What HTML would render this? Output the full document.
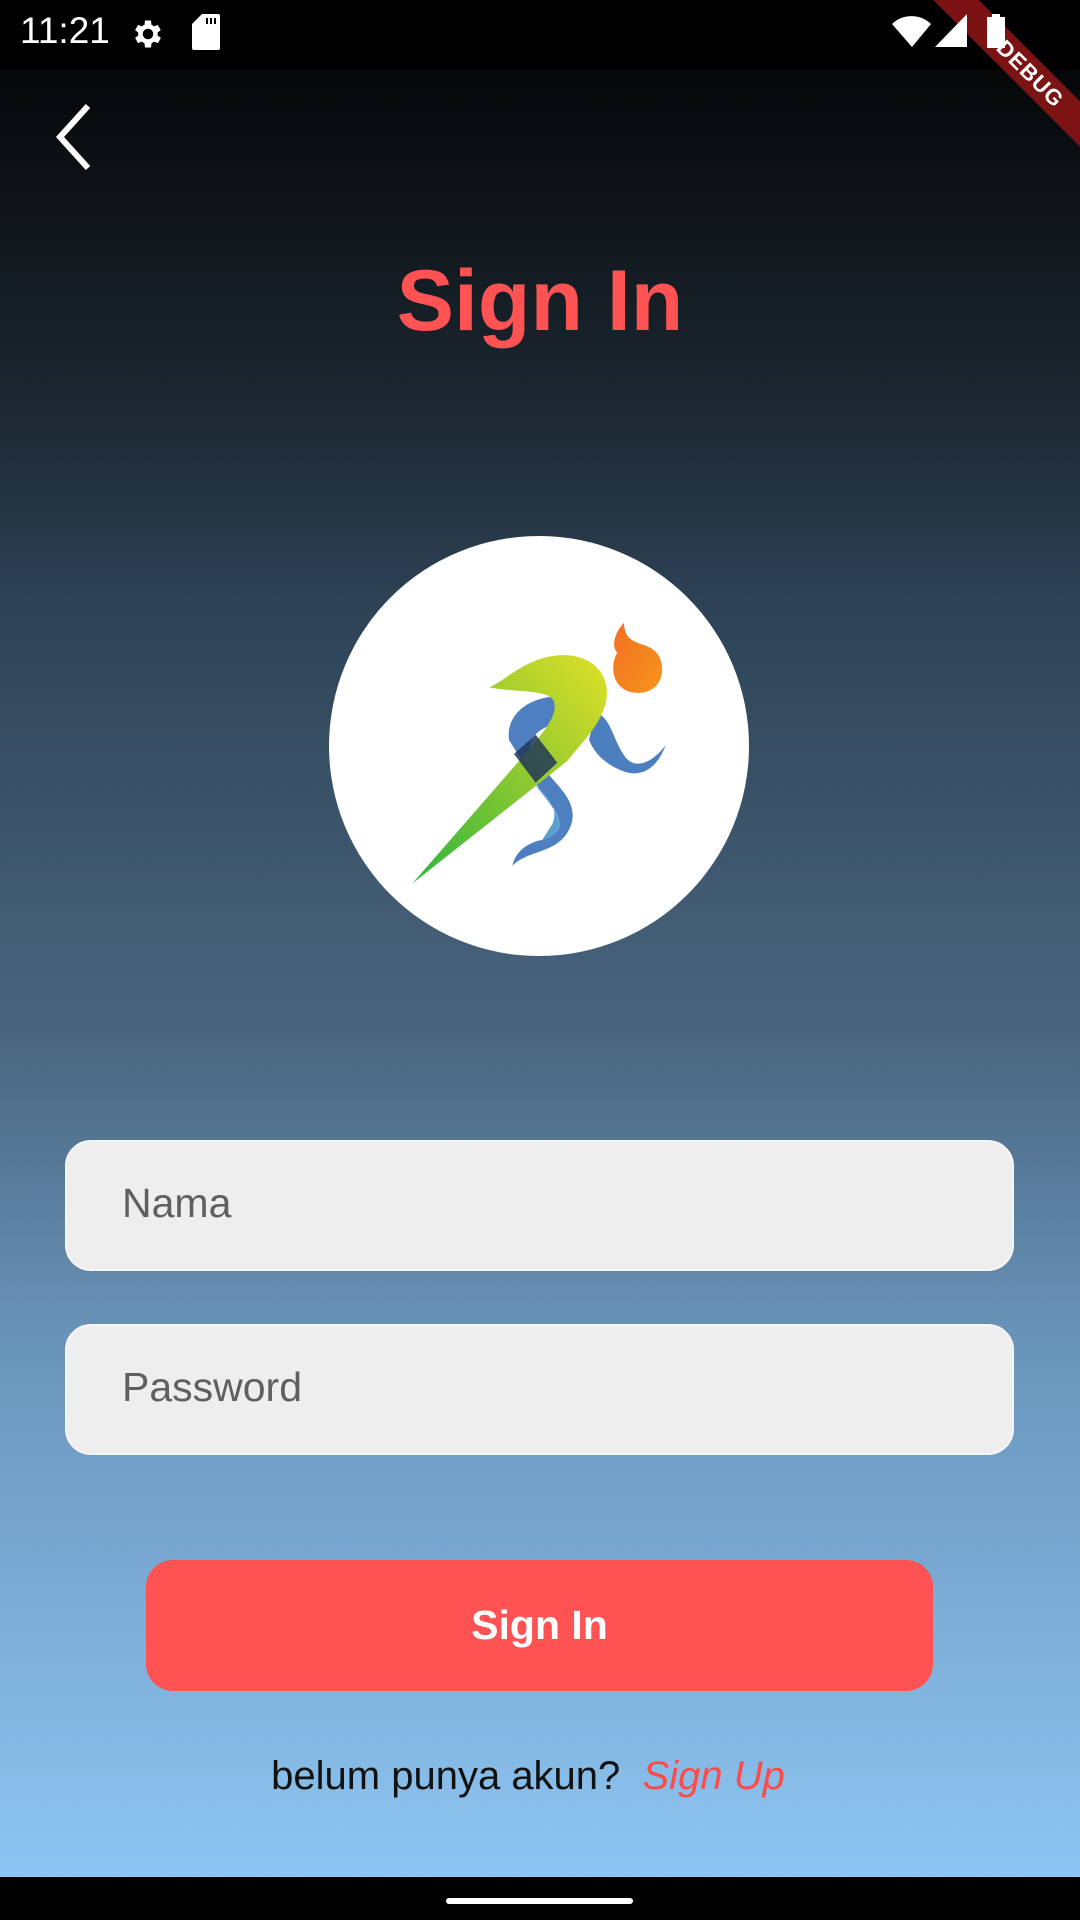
<!DOCTYPE html>
<html><head><meta charset="utf-8"><style>
html,body{margin:0;padding:0}
body{width:1080px;height:1920px;position:relative;overflow:hidden;font-family:"Liberation Sans",sans-serif;
background:linear-gradient(to bottom,#000 0px,#050708 70px,#0b0f13 150px,#1e2a35 430px,#2e4356 610px,#4a6680 1040px,#6a95bb 1350px,#8ec5f2 1877px);}
.abs{position:absolute}
.field{position:absolute;left:65px;width:949px;height:131px;background:#eeeeee;border-radius:26px;box-sizing:border-box;border:2px solid #f6f6f6}
.field span{position:absolute;left:55px;top:38px;font-size:41px;color:#5f5f5f}
</style></head><body>
<div class="abs" style="left:0;top:0;width:1080px;height:70px;background:#000"></div>
<div class="abs" style="left:860px;top:58px;width:340px;height:32px;background:rgba(140,22,22,0.88);transform:rotate(45deg);color:#fff;font-weight:bold;font-size:22px;line-height:32px;text-align:center;letter-spacing:1px">DEBUG</div>
<div class="abs" style="left:20px;top:10px;color:#fff;font-size:37px;">11:21</div>
<svg class="abs" style="left:130px;top:16px" width="36" height="36" viewBox="0 0 24 24"><path fill="#fff" d="M19.4 13a7.5 7.5 0 0 0 0-2l2.1-1.6-2-3.5-2.5 1a7.6 7.6 0 0 0-1.7-1L15 3h-4l-.4 2.9a7.6 7.6 0 0 0-1.7 1l-2.5-1-2 3.5L6.5 11a7.5 7.5 0 0 0 0 2l-2.1 1.6 2 3.5 2.5-1a7.6 7.6 0 0 0 1.7 1L11 21h4l.4-2.9a7.6 7.6 0 0 0 1.7-1l2.5 1 2-3.5zM13 15.5a3.5 3.5 0 1 1 0-7 3.5 3.5 0 0 1 0 7z" transform="translate(-1 0)"/></svg>
<svg class="abs" style="left:192px;top:14px" width="28" height="36" viewBox="0 0 14 18"><path fill="#fff" d="M5 0h8a1 1 0 0 1 1 1v16a1 1 0 0 1-1 1H1a1 1 0 0 1-1-1V5z"/><path fill="#000" d="M7 2h1v3H7zM9 2h1v3H9zM11 2h1v3h-1z"/></svg>
<svg class="abs" style="left:892px;top:14px" width="40" height="34" viewBox="0 0 40 34"><path fill="#fff" d="M0 10 A28 28 0 0 1 39 10 L20 33Z"/></svg>
<svg class="abs" style="left:935px;top:14px" width="32" height="33" viewBox="0 0 32 33"><path fill="#fff" d="M32 0V33H0Z"/></svg>
<svg class="abs" style="left:985px;top:14px" width="22" height="34" viewBox="0 0 22 34"><path fill="#fff" d="M7 0h8v3h5v31H2V3h5z"/></svg>
<svg class="abs" style="left:50px;top:100px" width="50" height="75" viewBox="0 0 50 75"><path d="M38 6 L10 37 L38 68" stroke="#fff" stroke-width="6" fill="none"/></svg>
<div class="abs" style="left:0;top:246px;width:1080px;text-align:center;color:#FF5252;font-weight:bold;font-size:86px;line-height:110px">Sign In</div>
<div class="abs" style="left:329px;top:536px;width:420px;height:420px;border-radius:50%;background:#fff"></div>
<svg class="abs" style="left:329px;top:536px" width="420" height="420" viewBox="30 50 1260 1260" preserveAspectRatio="none">
<defs><linearGradient id="g" x1="0" y1="1" x2="1" y2="0"><stop offset="0" stop-color="#2db540"/><stop offset="0.6" stop-color="#9ccc2e"/><stop offset="1" stop-color="#dfe028"/></linearGradient>
<linearGradient id="o" x1="0" y1="0" x2="1" y2="1"><stop offset="0" stop-color="#f26f22"/><stop offset="1" stop-color="#f7951d"/></linearGradient></defs>
<g transform="translate(0,-10) scale(1,1.05)">
<path fill="#4c7fbf" d="M830,560 C880,580 880,640 920,690 C950,725 1000,705 1040,655 C1010,730 960,745 915,730 C865,712 830,685 810,640 Z"/>
<path fill="#4e7fc0" d="M740,515 C640,510 560,560 570,640 L655,770 C700,830 770,900 670,925 C620,935 590,960 580,1000 C625,955 705,965 745,905 C790,835 730,785 695,745 L640,680 C620,650 650,605 710,595 Z"/>
<path fill="#5aa0cf" d="M650,770 C700,830 770,900 670,925 L700,880 C720,840 690,800 640,760Z"/>
<path fill="url(#g)" d="M280,1050 L600,700 C650,640 720,580 705,530 C690,495 600,505 510,490 C560,470 620,405 720,398 C820,392 880,455 860,535 C840,605 785,650 745,700 Z"/>
<path fill="#213757" opacity="0.85" d="M585,680 L650,625 L715,705 L650,762 Z"/>
<path fill="url(#o)" d="M915,305 C880,340 880,380 895,390 C870,430 880,500 950,505 C1020,510 1045,450 1020,400 C1000,370 970,370 950,360 C925,350 915,330 915,305 Z"/>
</g></svg>
<div class="field" style="top:1140px"><span>Nama</span></div>
<div class="field" style="top:1324px"><span>Password</span></div>
<div class="abs" style="left:146px;top:1560px;width:787px;height:131px;background:#FF5252;border-radius:27px;color:#fff;font-weight:bold;font-size:41px;line-height:131px;text-align:center">Sign In</div>
<div class="abs" style="left:-12px;top:1754px;width:1080px;text-align:center;font-size:40px;color:#111">belum punya akun? &nbsp;<i style="color:#FF4A4A">Sign Up</i></div>
<div class="abs" style="left:0;top:1877px;width:1080px;height:43px;background:#000"></div>
<div class="abs" style="left:446px;top:1898px;width:187px;height:6px;border-radius:3px;background:#fff"></div>
</body></html>
